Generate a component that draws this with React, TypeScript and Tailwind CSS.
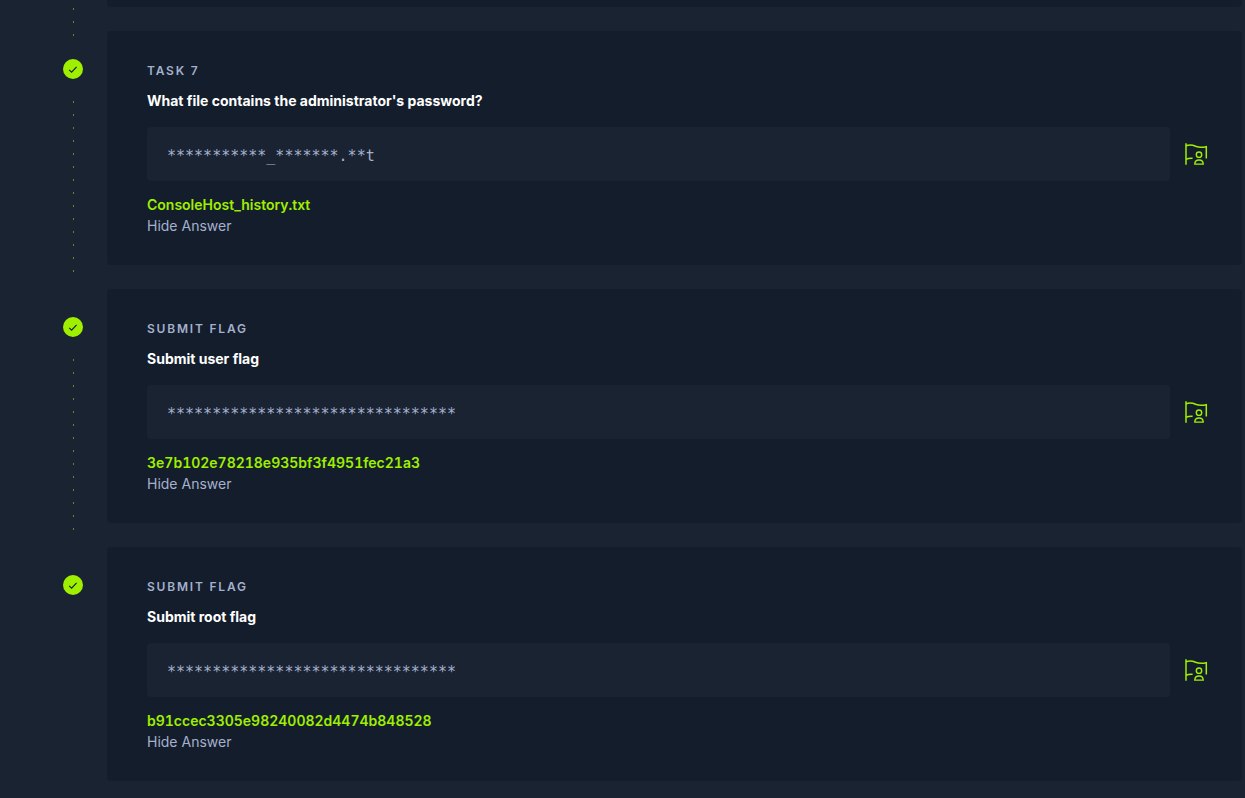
import { useState } from 'react'

interface Task {
  id: string
  label: string
  question: string
  mask: string
  answer: string
}

const tasks: Task[] = [
  {
    id: 'task-7',
    label: 'Task 7',
    question: "What file contains the administrator's password?",
    mask: '***********_*******.**t',
    answer: 'ConsoleHost_history.txt',
  },
  {
    id: 'user-flag',
    label: 'Submit Flag',
    question: 'Submit user flag',
    mask: '********************************',
    answer: '3e7b102e78218e935bf3f4951fec21a3',
  },
  {
    id: 'root-flag',
    label: 'Submit Flag',
    question: 'Submit root flag',
    mask: '********************************',
    answer: 'b91ccec3305e98240082d4474b848528',
  },
]

function DottedLine({ className = '' }: { className?: string }) {
  return (
    <div
      className={`w-px bg-[repeating-linear-gradient(to_bottom,#5f8b21_0px,#5f8b21_2px,transparent_2px,transparent_13px)] ${className}`}
    />
  )
}

function CheckBadge() {
  return (
    <svg className="h-5 w-5 shrink-0" viewBox="0 0 20 20" fill="none" role="img" aria-label="Completed">
      <circle cx="10" cy="10" r="10" fill="#9fef00" />
      <path d="M6.2 10.8 8.6 13.2 13.6 7.9" stroke="#141d2b" strokeWidth="1.1" />
    </svg>
  )
}

function FlagUserIcon() {
  return (
    <svg className="h-6 w-6" viewBox="0 0 24 24" fill="none" stroke="#9fef00" strokeWidth="1.5" aria-hidden="true">
      <path d="M2 1.2v21.6" />
      <path d="M2 3.8c3.8-1.5 6.6-.9 9.6.5 3 1.3 6 1.5 10.7.4v11.8" />
      <path d="M2 17.2c2-.9 4.2-1.2 6.6-1" />
      <circle cx="15" cy="12.7" r="2.7" strokeWidth="1.4" />
      <path d="M10.8 22.1c0-2.7 1.7-4.1 4.2-4.1s4.2 1.4 4.2 4.1z" strokeWidth="1.4" />
    </svg>
  )
}

function TaskCard({ task }: { task: Task }) {
  const [shown, setShown] = useState(true)

  return (
    <section className="min-w-0 flex-1 rounded bg-[#141d2b] pt-8 pr-[34px] pb-[29px] pl-10">
      <h2 className="text-xs leading-4 font-semibold tracking-[0.15em] text-[#a4b1cd] uppercase">{task.label}</h2>
      <label htmlFor={task.id} className="mt-3 block text-sm leading-5 font-bold text-white">
        {task.question}
      </label>
      <div className="mt-4 flex items-center gap-[14px]">
        <input
          id={task.id}
          type="text"
          readOnly
          placeholder={task.mask}
          className="h-[54px] min-w-0 flex-1 rounded bg-[#1a2332] px-5 pt-1 font-['DejaVu_Sans_Mono',monospace] text-[15px] text-[#a4b1cd] outline-none placeholder:text-[#a4b1cd]"
        />
        <button type="button" aria-label="Show flag owner" className="cursor-pointer">
          <FlagUserIcon />
        </button>
      </div>
      {shown && (
        <p className="mt-[13px] text-sm leading-[22px] font-semibold text-[#9fef00] tabular-nums">{task.answer}</p>
      )}
      <button
        type="button"
        onClick={() => setShown(!shown)}
        className="block cursor-pointer text-sm leading-5 text-[#a4b1cd]"
      >
        {shown ? 'Hide Answer' : 'Show Answer'}
      </button>
    </section>
  )
}

export default function App() {
  return (
    <main className="min-h-screen bg-[#1a2332] pr-[3px] pl-[63px] font-['Inter',sans-serif]">
      <ol>
        {/* tail of the previous task */}
        <li className="flex h-[31px] gap-6">
          <div className="flex w-5 flex-col items-center pt-2">
            <DottedLine className="h-7 shrink-0" />
          </div>
          <div className="h-[7px] flex-1 rounded-b bg-[#141d2b]" />
        </li>
        {tasks.map((task, index) => (
          <li key={task.id} className="flex gap-6">
            <div className="flex w-5 flex-col items-center pt-7">
              <CheckBadge />
              {index < tasks.length - 1 && <DottedLine className="mt-[22px] mb-4 flex-1" />}
            </div>
            <div className="flex min-w-0 flex-1 pb-6">
              <TaskCard task={task} />
            </div>
          </li>
        ))}
      </ol>
    </main>
  )
}
